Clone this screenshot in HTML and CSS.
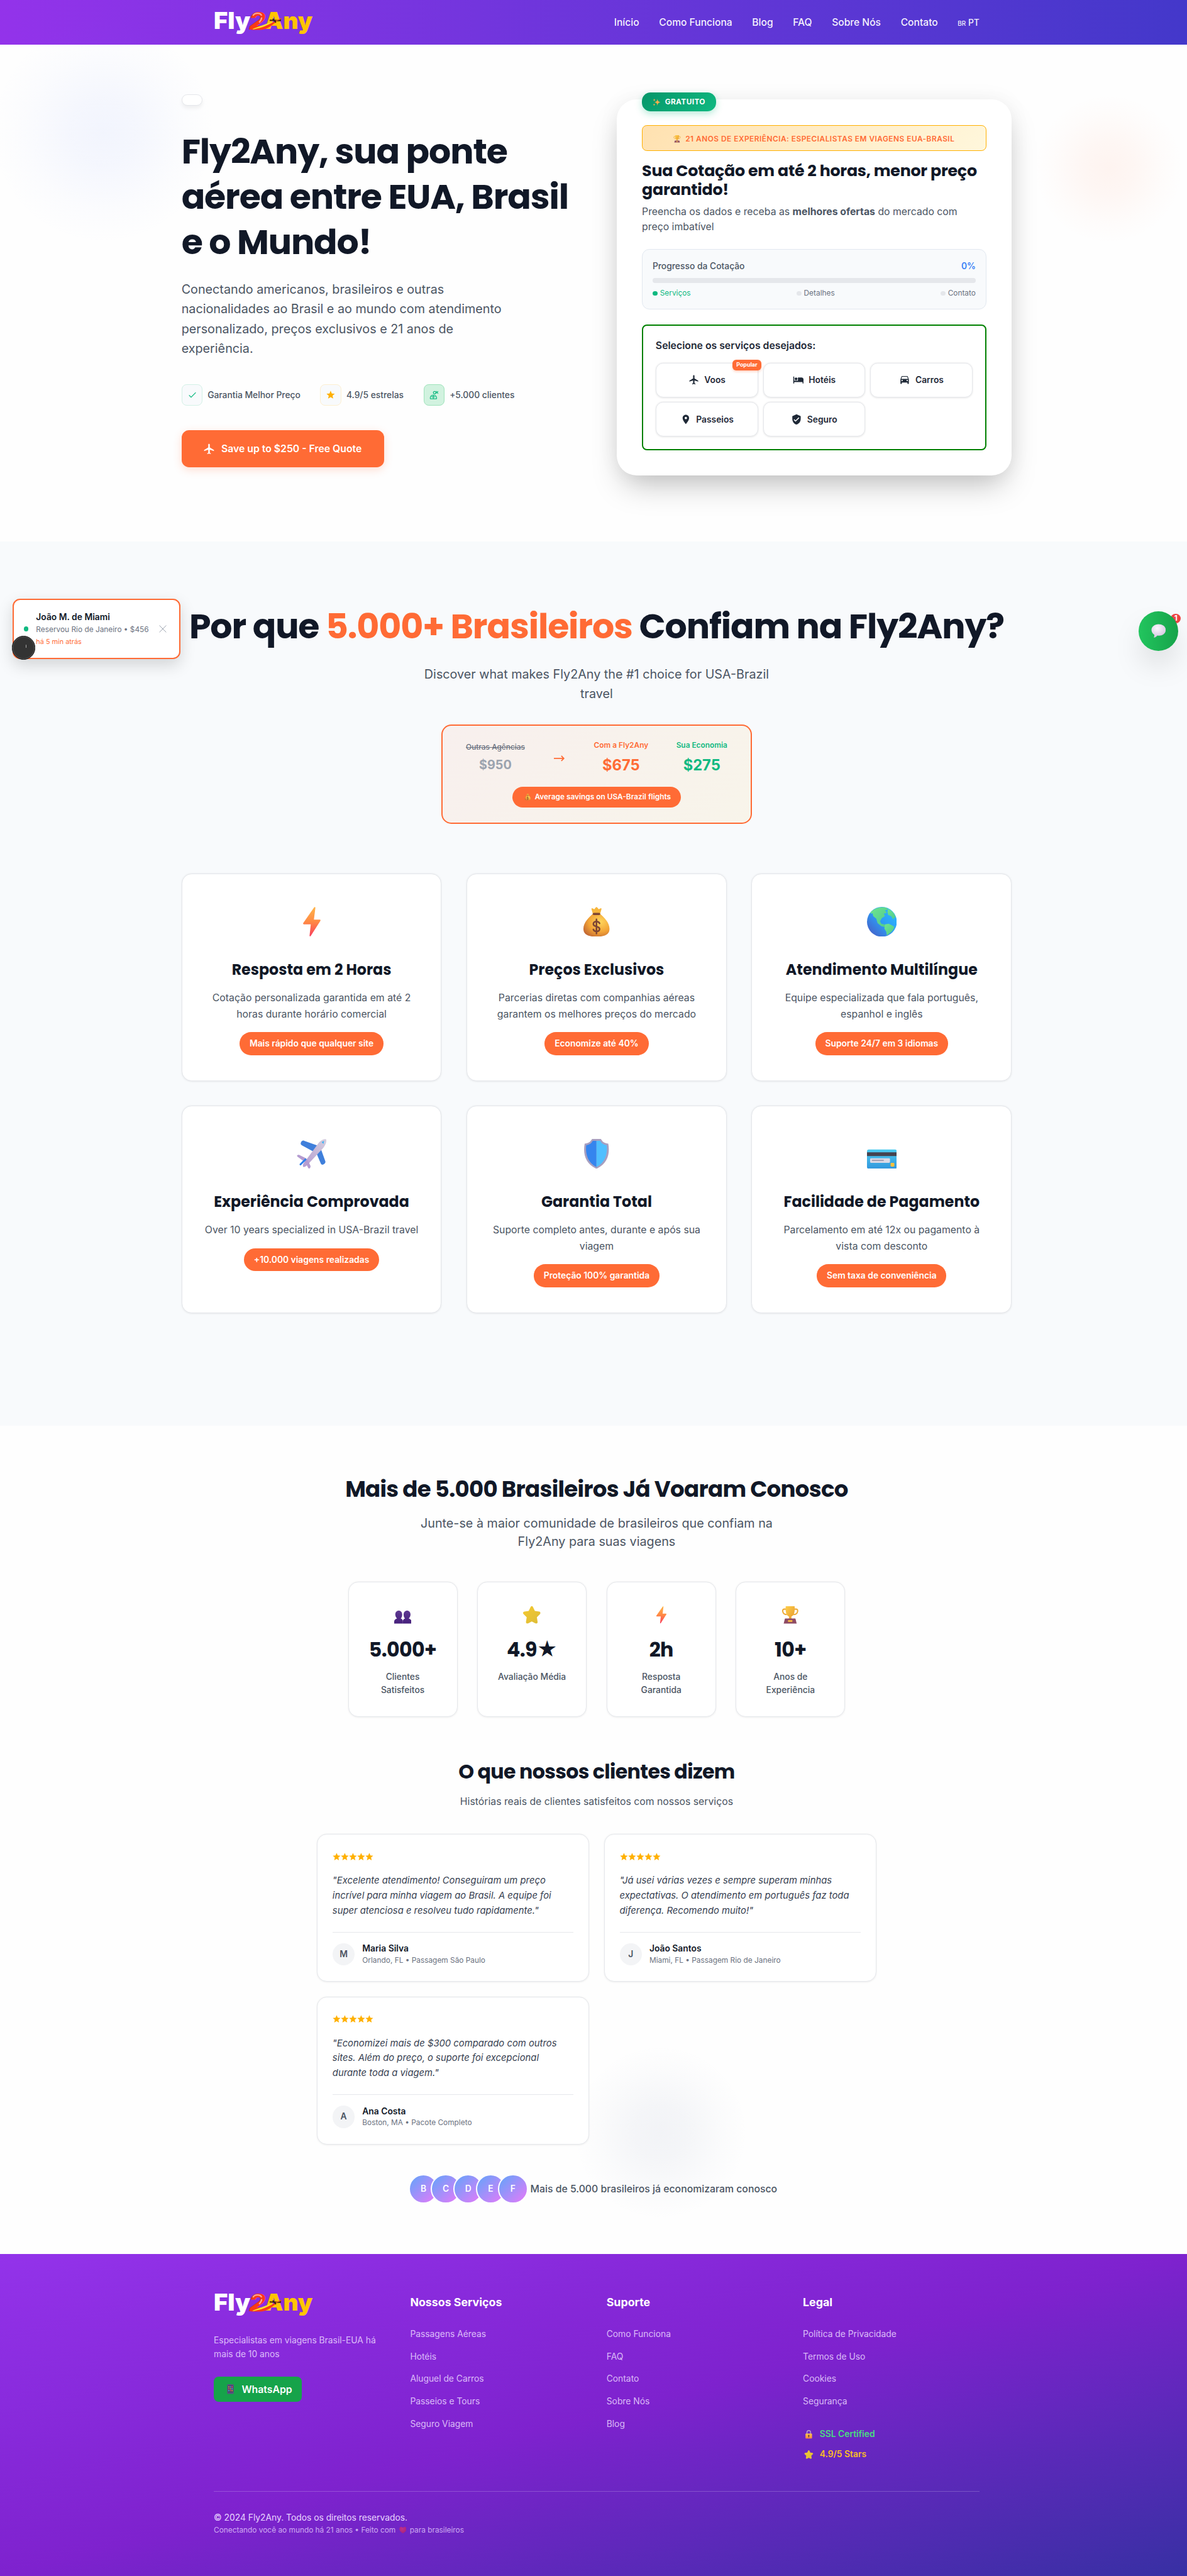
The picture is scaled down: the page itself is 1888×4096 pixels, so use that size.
FILE: index.html
```html
<!DOCTYPE html>
<html lang="pt-BR">
<head>
<meta charset="utf-8">
<title>Fly2Any</title>
<link rel="stylesheet" href="styles.css">
</head>
<body>
<svg class="sprite" aria-hidden="true">
  <defs>
    <linearGradient id="g-bolt" x1="0" y1="0" x2="0" y2="1"><stop offset="0" stop-color="#ffb54a"/><stop offset=".5" stop-color="#ff8a45"/><stop offset="1" stop-color="#f93e5c"/></linearGradient>
    <radialGradient id="g-bag" cx=".65" cy=".35" r=".75"><stop offset="0" stop-color="#ffd65c"/><stop offset=".6" stop-color="#f2a336"/><stop offset="1" stop-color="#c46a34"/></radialGradient>
    <linearGradient id="g-sea" x1="1" y1="0" x2="0" y2="1"><stop offset="0" stop-color="#2bc0ff"/><stop offset=".5" stop-color="#2d9bf5"/><stop offset="1" stop-color="#4a55c0"/></linearGradient>
    <linearGradient id="g-land" x1="0" y1="0" x2="1" y2="1"><stop offset="0" stop-color="#6fe58f"/><stop offset="1" stop-color="#4fc98e"/></linearGradient>
    <linearGradient id="g-body" x1="1" y1="0" x2="0" y2="1"><stop offset="0" stop-color="#d5cfdf"/><stop offset="1" stop-color="#b49bd0"/></linearGradient>
    <linearGradient id="g-gold" x1="0" y1="0" x2="1" y2="1"><stop offset="0" stop-color="#ffcf4a"/><stop offset="1" stop-color="#e79a2e"/></linearGradient>
    <linearGradient id="g-star" x1="0" y1="0" x2="1" y2="1"><stop offset="0" stop-color="#f5c930"/><stop offset="1" stop-color="#dcbc38"/></linearGradient>
    <linearGradient id="g-bust" x1="0" y1="0" x2="0" y2="1"><stop offset="0" stop-color="#5f3a92"/><stop offset="1" stop-color="#46207c"/></linearGradient>
    <linearGradient id="g-card" x1="0" y1="0" x2="0" y2="1"><stop offset="0" stop-color="#4ccbf0"/><stop offset="1" stop-color="#3297dd"/></linearGradient>
    <linearGradient id="g-lock" x1="0" y1="0" x2="0" y2="1"><stop offset="0" stop-color="#ffc44c"/><stop offset="1" stop-color="#f9873f"/></linearGradient>
    <radialGradient id="g-talk" cx=".4" cy=".3" r=".8"><stop offset="0" stop-color="#fbf8fd"/><stop offset="1" stop-color="#cdbfdb"/></radialGradient>
    <radialGradient id="g-heart" cx=".4" cy=".3" r=".8"><stop offset="0" stop-color="#d8367d"/><stop offset="1" stop-color="#bb1f5c"/></radialGradient>
  </defs>
  <symbol id="e-bolt" viewBox="0 0 48 48"><path fill="url(#g-bolt)" d="M28 .8c.6-1 2-.6 2 .6L27.600 20.500H37c1 0 1.500 1 1 1.900L22.500 46.800c-.6 1-2 .5-1.900-.6L22.600 28H11.500c-1 0-1.600-1-1.100-1.900z"/></symbol>
  <symbol id="e-bag" viewBox="0 0 48 48"><path fill="#f7b63c" d="M18 11 16 3.500c-.3-1 .6-1.600 1.500-1.200l3 1.400L23 .7c.6-.7 1.500-.7 2.100 0l2.500 3 3-1.400c.9-.4 1.800.2 1.500 1.200L30 11z"/><path fill="url(#g-bag)" d="M18.500 11h11C36 17 45 25 45 35.500 45 43.500 39 48 24 48S3 43.500 3 35.500C3 25 12 17 18.500 11z"/><rect x="18" y="9.500" width="12" height="3.600" rx="1.800" fill="#7d4533"/><path d="M29 26.500c-.8-2-2.600-3-5-3-2.800 0-5 1.500-5 4 0 5.500 10 2.500 10 8 0 2.600-2.200 4-5 4-2.500 0-4.400-1.200-5-3.200M24 20v23" fill="none" stroke="#7d4533" stroke-width="2.600" stroke-linecap="round"/></symbol>
  <symbol id="e-globe" viewBox="0 0 48 48"><circle cx="24" cy="24" r="24" fill="url(#g-sea)"/><path fill="url(#g-land)" d="M6 8.500C12 2 22-.8 30 1c2.500.8 4 2.500 3 3.500l-4 1 3 4-5 1.500 2 4-5 3-3 5 2 4 5 1 4 4-2 1-7-2-6-5-2-7-5-4-1-5c-2 .5-3.500 2-3 0z"/><path fill="url(#g-land)" d="M34 3c6 3 10 7 12 13l-4 4-3-5-5-2-1-5z"/><path fill="url(#g-land)" d="M29 28l6-1 6 3 3 2c-1 4-4 8-7 10l-5 4-1-6-3-5z"/></symbol>
  <symbol id="e-plane" viewBox="0 0 48 48"><path fill="#3f7fdb" d="M7 5c1-2 3-3 5-2l25 9-9 9L8 10C6 9 6 7 7 5zM43 41c-2 1-4 0-4.500-2L30 19l7-8 9 25c.6 2-1 4-3 5z"/><path fill="url(#g-body)" d="M47.500.8c1.200 3-1.500 10-6 15L17 42c-4 4-6.500 3-6.500 3S8.500 42 12 38L34 8C38 2 45-1 47.500.8z"/><path fill="#b49bd0" d="M.6 26.500c1-1 2-1.300 3.500-.8L15 31l3 4 4 8c.5 1.500 0 3-1 4s-2 .5-2.600-.5L14 38 2 29c-1-.8-2-1.600-1.400-2.500z"/><path fill="#3fb4f5" d="M40 5l4-2-1 5z"/><path d="M6 41l8-8" stroke="#2e80ec" stroke-width="3" stroke-linecap="round"/></symbol>
  <symbol id="e-shield" viewBox="0 0 48 48"><path fill="#a79fc0" d="M17 0h14l3 4c2 2 5 3 9 3.500C46 24 42 40 24 48 6 40 2 24 5 7.500 9 7 12 6 14 4z"/><path fill="#3585ee" d="M24 3h-6l-2 3c-2 2-5 3.500-8.500 4C6 24 10 38 24 45.200z"/><path fill="#50bfff" d="M24 3h6l2 3c2 2 5 3.500 8.500 4C42 24 38 38 24 45.200z"/></symbol>
  <symbol id="e-card" viewBox="0 0 48 48"><rect x="0" y="17" width="48" height="31" rx="3" fill="url(#g-card)"/><rect y="21.500" width="48" height="6" fill="#45434f"/><rect x="5" y="31" width="32" height="7.500" rx="1.500" fill="#dcdae6"/><rect x="8" y="33.500" width="19" height="2" fill="#a39fb2"/><rect x="38" y="38.500" width="6" height="6" rx="1.500" fill="#f7c13c"/></symbol>
  <symbol id="e-busts" viewBox="0 0 48 48"><g fill="url(#g-bust)"><path d="M0 48v-5c0-6 5-8 8-9-3-3-5-7-5-11 0-7 4-11 9.500-11S22 16 22 23c0 4-1 8-4 11 3 1 6 3 6 8v6z"/><path d="M24 48v-6c0-5 3-7 6-8-3-3-4-7-4-11 0-7 4-11 9.500-11S45 16 45 23c0 4-2 8-5 11 3 1 8 3 8 9v5z"/></g></symbol>
  <symbol id="e-star" viewBox="0 0 48 48"><path fill="url(#g-star)" d="M20.500 2.500c1.500-3.300 5.500-3.300 7 0L32.500 13l12 1.700c3.500.5 4.700 4.500 2.200 7L38 30.500l2 12.500c.6 3.600-2.800 6-6 4.300L24 42l-10 5.300c-3.200 1.700-6.600-.7-6-4.300l2-12.500-8.700-8.800c-2.500-2.500-1.300-6.500 2.200-7L15.500 13z"/></symbol>
  <symbol id="e-trophy" viewBox="0 0 48 48"><path d="M13 8H7c-3 0-4 3-3.500 6C4.500 20 9 23 15 23M35 8h6c3 0 4 3 3.500 6-1 6-5.500 9-11.500 9" fill="none" stroke="#edab38" stroke-width="3.600"/><path fill="url(#g-gold)" d="M11.500 1.500C11.500.6 12 0 13 0h22c1 0 1.500.6 1.500 1.500C37 14 36 25 27 29l1 6h-8l1-6c-9-4-10-15-9.500-27.500z"/><path fill="#8e4b63" d="M11 34h26c1 0 2 1 2 2l3 12H6l3-12c0-1 1-2 2-2z"/><rect x="18" y="38" width="12" height="5.500" rx="1" fill="#f2b445"/></symbol>
  <symbol id="e-sparkles" viewBox="0 0 48 48"><g fill="#fdb04b"><path d="M29 3c1 13 5 19 17 21-12 2-16 9-17 22-1-13-5-20-17-22C24 22 28 16 29 3z"/><path d="M10 2c.6 6 2.500 8 8 9-5.500 1-7.400 3-8 9-.6-6-2.500-8-8-9 5.500-1 7.400-3 8-9zM9 31c.5 5 2 7 7 8-5 1-6.500 3-7 8-.5-5-2-7-7-8 5-1 6.500-3 7-8z"/></g></symbol>
  <symbol id="e-phone" viewBox="0 0 48 48"><rect x="9" y="1" width="31" height="46" rx="3" fill="#5c4f82"/><rect x="12" y="7" width="25" height="32" fill="#463c66"/><g><path fill="#f9a13a" d="M14 11h5v5h-5zM22 20h5v5h-5zM30 29h5v5h-5z"/><path fill="#45b6f5" d="M22 11h5v5h-5zM30 20h5v5h-5zM14 29h5v5h-5z"/><path fill="#ef5f6f" d="M30 11h5v5h-5zM14 20h5v5h-5zM22 29h5v5h-5z"/></g></symbol>
  <symbol id="e-lock" viewBox="0 0 48 48"><path d="M14 22V13c0-7 4-11 10-11s10 4 10 11v9" fill="none" stroke="#b8a9cd" stroke-width="4.500"/><rect x="6" y="19" width="36" height="28" rx="3.500" fill="url(#g-lock)"/><path fill="#5a3a42" d="M24 26a4 4 0 0 1 2.300 7.300L27 40h-6l.7-6.700A4 4 0 0 1 24 26z"/></symbol>
  <symbol id="e-heart" viewBox="0 0 48 48"><path fill="url(#g-heart)" d="M24 46C10 37 1 28 1 17 1 9 6 3 13 3c5 0 9 3 11 7 2-4 6-7 11-7 7 0 12 6 12 14 0 11-9 20-23 29z"/></symbol>
  <symbol id="e-talk" viewBox="0 0 48 48"><path fill="url(#g-talk)" d="M24 3c13 0 23 8 23 18.500S38 40 26 40c-2 0-4 0-6-.5C17 43 13 46 10 46c-1.500 0-1.500-1.300-.8-2.500.9-1.700 1.300-4 .8-6.500C4.500 33.500 1 28 1 21.500 1 11 11 3 24 3z"/></symbol>
  <symbol id="i-flight" viewBox="0 0 24 24"><path d="M21 16v-2l-8-5V3.500c0-.83-.67-1.500-1.500-1.500S10 2.670 10 3.500V9l-8 5v2l8-2.500V19l-2 1.500V22l3.500-1 3.500 1v-1.500L13 19v-5.500l8 2.500z"/></symbol>
  <symbol id="i-hotel" viewBox="0 0 24 24"><path d="M7 13c1.660 0 3-1.340 3-3S8.660 7 7 7s-3 1.340-3 3 1.340 3 3 3zm12-6h-8v7H3V5H1v15h2v-3h18v3h2v-9c0-2.210-1.790-4-4-4z"/></symbol>
  <symbol id="i-car" viewBox="0 0 24 24"><path d="M18.920 5.010C18.720 4.420 18.160 4 17.500 4h-11c-.66 0-1.210.42-1.420 1.010L3 11v9c0 .55.45 1 1 1h1c.55 0 1-.45 1-1v-2h12v2c0 .55.45 1 1 1h1c.55 0 1-.45 1-1v-9l-2.080-5.990zM6.500 15c-.83 0-1.500-.67-1.500-1.500S5.670 12 6.500 12s1.500.67 1.500 1.500S7.330 15 6.500 15zm11 0c-.83 0-1.500-.67-1.500-1.500s.67-1.500 1.500-1.500 1.500.67 1.500 1.500-.67 1.500-1.500 1.500zM5 10l1.500-4.500h11L19 10H5z"/></symbol>
  <symbol id="i-pin" viewBox="0 0 24 24"><path d="M12 2C8.130 2 5 5.130 5 9c0 5.250 7 13 7 13s7-7.750 7-13c0-3.870-3.130-7-7-7zm0 9.500c-1.380 0-2.500-1.120-2.500-2.500s1.120-2.500 2.500-2.500 2.500 1.120 2.500 2.500-1.120 2.500-2.500 2.500z"/></symbol>
  <symbol id="i-verified" viewBox="0 0 24 24"><path d="M12 1L3 5v6c0 5.550 3.840 10.740 9 12 5.160-1.260 9-6.450 9-12V5l-9-4zm-2 16l-4-4 1.410-1.410L10 14.170l6.590-6.590L18 9l-8 8z"/></symbol>
  <symbol id="i-check" viewBox="0 0 24 24"><path d="M9 16.170L4.830 12l-1.420 1.410L9 19 21 7l-1.410-1.410z"/></symbol>
  <symbol id="i-star" viewBox="0 0 24 24"><path d="M12 17.270L18.180 21l-1.640-7.030L22 9.240l-7.190-.61L12 2 9.190 8.630 2 9.240l5.460 4.730L5.820 21z"/></symbol>
  <symbol id="i-users" viewBox="0 0 24 24"><g fill="none" stroke="currentColor" stroke-width="1.800"><path d="M2 20.500c0-5 2.600-8 7.500-8s8 3 8 8c0 .8-.5 1-1 1H3c-.5 0-1-.2-1-1zM5 16.500h9M9.500 13v8"/><circle cx="12.500" cy="6.500" r="3"/><path d="M15.500 8.500L21 3.500M16 3l5 6"/></g></symbol>
  <symbol id="banner-plane" viewBox="0 0 157 42">
    <path d="M62 10c3-5 12-5 14 0M76 13c0 3-2 6-4 8" fill="none" stroke="#ffa593" stroke-width="2.200"/>
    <path fill="#fb3a16" d="M59 32c14-1 26-7 44-15-11 9-18 16-30 16H60z"/>
    <path fill="#ffe12b" d="M61 31.500c12-4.500 20-7.500 34-12-8 6-18 10-32 12.500z"/>
    <path d="M89 17.500l17 .5M94 15l5 6M106 15v4" stroke="#3a2412" stroke-width="2"/>
    <path d="M99 18.500l9-4" stroke="#e8631a" stroke-width="1.500"/>
  </symbol>
</svg>
<div class="viewport">
<div class="page">

<header class="header">
  <svg class="logo" viewBox="0 0 157 42">
    <text class="logo-fly" x="-1" y="31" textLength="59" lengthAdjust="spacingAndGlyphs">Fly</text>
    <text class="logo-any" x="81" y="31" textLength="77" lengthAdjust="spacingAndGlyphs">Any</text>
    <text class="logo-two" x="56" y="32" textLength="26" lengthAdjust="spacingAndGlyphs">2</text>
    <use href="#banner-plane"/>
  </svg>
  <nav class="nav">
    <a>Início</a><a>Como Funciona</a><a>Blog</a><a>FAQ</a><a>Sobre Nós</a><a>Contato</a>
    <span class="lang"><small>BR</small> PT</span>
  </nav>
</header>

<section class="hero">
  <span class="blob blob-blue"></span>
  <span class="blob blob-orange"></span>
  <div class="hero-copy">
    <div class="hero-pill"></div>
    <h1 class="hero-title">Fly2Any, sua ponte<br>aérea entre EUA, Brasil<br>e o Mundo!</h1>
    <p class="hero-text">Conectando americanos, brasileiros e outras<br>nacionalidades ao Brasil e ao mundo com atendimento<br>personalizado, preços exclusivos e 21 anos de<br>experiência.</p>
    <div class="trust">
      <div class="trust-item"><span class="trust-icon trust-check"><svg><use href="#i-check"/></svg></span>Garantia Melhor Preço</div>
      <div class="trust-item"><span class="trust-icon trust-star"><svg><use href="#i-star"/></svg></span>4.9/5 estrelas</div>
      <div class="trust-item"><span class="trust-icon trust-users"><svg><use href="#i-users"/></svg></span>+5.000 clientes</div>
    </div>
    <a class="cta"><svg><use href="#i-flight"/></svg>Save up to $250 - Free Quote</a>
  </div>

  <div class="quote">
    <span class="free-badge"><svg><use href="#e-sparkles"/></svg>GRATUITO</span>
    <div class="years"><svg><use href="#e-trophy"/></svg>21 ANOS DE EXPERIÊNCIA: ESPECIALISTAS EM VIAGENS EUA-BRASIL</div>
    <h2 class="quote-title">Sua Cotação em até 2 horas, menor preço<br>garantido!</h2>
    <p class="quote-text">Preencha os dados e receba as <strong>melhores ofertas</strong> do mercado com<br>preço imbatível</p>
    <div class="progress">
      <div class="progress-head"><span>Progresso da Cotação</span><b>0%</b></div>
      <div class="progress-bar"></div>
      <div class="progress-steps"><span class="on"><i></i>Serviços</span><span><i></i>Detalhes</span><span><i></i>Contato</span></div>
    </div>
    <div class="services">
      <div class="services-title">Selecione os serviços desejados:</div>
      <div class="services-grid">
        <button><svg><use href="#i-flight"/></svg>Voos<em>Popular</em></button>
        <button><svg><use href="#i-hotel"/></svg>Hotéis</button>
        <button><svg><use href="#i-car"/></svg>Carros</button>
        <button><svg><use href="#i-pin"/></svg>Passeios</button>
        <button><svg><use href="#i-verified"/></svg>Seguro</button>
      </div>
    </div>
  </div>
</section>

<section class="why">
  <h2 class="why-title">Por que <span>5.000+ Brasileiros</span> Confiam na Fly2Any?</h2>
  <p class="why-text">Discover what makes Fly2Any the #1 choice for USA-Brazil<br>travel</p>
  <div class="compare">
    <div class="compare-row">
      <div class="cmp cmp-old"><span>Outras Agências</span><b>$950</b></div>
      <svg class="arrow" viewBox="0 0 21 14"><path d="M2 7h16M14 3l4 4-4 4"/></svg>
      <div class="cmp cmp-us"><span>Com a Fly2Any</span><b>$675</b></div>
      <div class="cmp cmp-save"><span>Sua Economia</span><b>$275</b></div>
    </div>
    <div class="compare-pill"><svg><use href="#e-bag"/></svg>Average savings on USA-Brazil flights</div>
  </div>
  <div class="features">
    <article class="feature"><svg><use href="#e-bolt"/></svg><h3>Resposta em 2 Horas</h3><p>Cotação personalizada garantida em até 2<br>horas durante horário comercial</p><span>Mais rápido que qualquer site</span></article>
    <article class="feature"><svg><use href="#e-bag"/></svg><h3>Preços Exclusivos</h3><p>Parcerias diretas com companhias aéreas<br>garantem os melhores preços do mercado</p><span>Economize até 40%</span></article>
    <article class="feature"><svg><use href="#e-globe"/></svg><h3>Atendimento Multilíngue</h3><p>Equipe especializada que fala português,<br>espanhol e inglês</p><span>Suporte 24/7 em 3 idiomas</span></article>
    <article class="feature"><svg><use href="#e-plane"/></svg><h3>Experiência Comprovada</h3><p>Over 10 years specialized in USA-Brazil travel</p><span>+10.000 viagens realizadas</span></article>
    <article class="feature"><svg><use href="#e-shield"/></svg><h3>Garantia Total</h3><p>Suporte completo antes, durante e após sua<br>viagem</p><span>Proteção 100% garantida</span></article>
    <article class="feature"><svg><use href="#e-card"/></svg><h3>Facilidade de Pagamento</h3><p>Parcelamento em até 12x ou pagamento à<br>vista com desconto</p><span>Sem taxa de conveniência</span></article>
  </div>
</section>

<section class="proof">
  <span class="blob blob-gray"></span>
  <h2 class="proof-title">Mais de 5.000 Brasileiros Já Voaram Conosco</h2>
  <p class="proof-text">Junte-se à maior comunidade de brasileiros que confiam na<br>Fly2Any para suas viagens</p>
  <div class="stats">
    <div class="stat"><svg><use href="#e-busts"/></svg><b>5.000+</b><span>Clientes<br>Satisfeitos</span></div>
    <div class="stat"><svg><use href="#e-star"/></svg><b>4.9★</b><span>Avaliação Média</span></div>
    <div class="stat"><svg><use href="#e-bolt"/></svg><b>2h</b><span>Resposta<br>Garantida</span></div>
    <div class="stat"><svg><use href="#e-trophy"/></svg><b>10+</b><span>Anos de<br>Experiência</span></div>
  </div>
  <h3 class="say-title">O que nossos clientes dizem</h3>
  <p class="say-text">Histórias reais de clientes satisfeitos com nossos serviços</p>
  <div class="reviews">
    <article class="review">
      <div class="stars"><svg><use href="#i-star"/></svg><svg><use href="#i-star"/></svg><svg><use href="#i-star"/></svg><svg><use href="#i-star"/></svg><svg><use href="#i-star"/></svg></div>
      <p>"Excelente atendimento! Conseguiram um preço<br>incrível para minha viagem ao Brasil. A equipe foi<br>super atenciosa e resolveu tudo rapidamente."</p>
      <footer><i>M</i><div><b>Maria Silva</b><span>Orlando, FL • Passagem São Paulo</span></div></footer>
    </article>
    <article class="review">
      <div class="stars"><svg><use href="#i-star"/></svg><svg><use href="#i-star"/></svg><svg><use href="#i-star"/></svg><svg><use href="#i-star"/></svg><svg><use href="#i-star"/></svg></div>
      <p>"Já usei várias vezes e sempre superam minhas<br>expectativas. O atendimento em português faz toda<br>diferença. Recomendo muito!"</p>
      <footer><i>J</i><div><b>João Santos</b><span>Miami, FL • Passagem Rio de Janeiro</span></div></footer>
    </article>
    <article class="review">
      <div class="stars"><svg><use href="#i-star"/></svg><svg><use href="#i-star"/></svg><svg><use href="#i-star"/></svg><svg><use href="#i-star"/></svg><svg><use href="#i-star"/></svg></div>
      <p>"Economizei mais de $300 comparado com outros<br>sites. Além do preço, o suporte foi excepcional<br>durante toda a viagem."</p>
      <footer><i>A</i><div><b>Ana Costa</b><span>Boston, MA • Pacote Completo</span></div></footer>
    </article>
  </div>
  <div class="crowd"><i>B</i><i>C</i><i>D</i><i>E</i><i>F</i><span>Mais de 5.000 brasileiros já economizaram conosco</span></div>
</section>

<footer class="footer">
  <div class="footer-cols">
    <div>
      <svg class="logo" viewBox="0 0 157 42">
        <text class="logo-fly" x="-1" y="31" textLength="59" lengthAdjust="spacingAndGlyphs">Fly</text>
        <text class="logo-any" x="81" y="31" textLength="77" lengthAdjust="spacingAndGlyphs">Any</text>
        <text class="logo-two" x="56" y="32" textLength="26" lengthAdjust="spacingAndGlyphs">2</text>
        <use href="#banner-plane"/>
      </svg>
      <p class="footer-about">Especialistas em viagens Brasil-EUA há<br>mais de 10 anos</p>
      <a class="whats"><svg><use href="#e-phone"/></svg>WhatsApp</a>
    </div>
    <div><h4>Nossos Serviços</h4><ul><li>Passagens Aéreas</li><li>Hotéis</li><li>Aluguel de Carros</li><li>Passeios e Tours</li><li>Seguro Viagem</li></ul></div>
    <div><h4>Suporte</h4><ul><li>Como Funciona</li><li>FAQ</li><li>Contato</li><li>Sobre Nós</li><li>Blog</li></ul></div>
    <div><h4>Legal</h4><ul><li>Política de Privacidade</li><li>Termos de Uso</li><li>Cookies</li><li>Segurança</li></ul>
      <div class="seal seal-ssl"><svg><use href="#e-lock"/></svg>SSL Certified</div>
      <div class="seal seal-stars"><svg><use href="#e-star"/></svg>4.9/5 Stars</div>
    </div>
  </div>
  <div class="footer-end">
    <p>© 2024 Fly2Any. Todos os direitos reservados.</p>
    <small>Conectando você ao mundo há 21 anos • Feito com <svg><use href="#e-heart"/></svg> para brasileiros</small>
  </div>
</footer>

<aside class="toast">
  <i></i>
  <div><b>João M. de Miami</b><span>Reservou Rio de Janeiro • $456</span><em>há 5 min atrás</em></div>
  <svg viewBox="0 0 12 12"><path d="M.5.5l11 11M11.500.5l-11 11"/></svg>
</aside>
<span class="dev-dot"></span>
<div class="chat"><b>1</b><span><svg><use href="#e-talk"/></svg></span></div>

</div>
</div>
</body>
</html>
```

FILE: styles.css
```css
* { box-sizing: border-box; margin: 0; padding: 0; }

body {
  font-family: Inter, sans-serif;
  color: #111827;
  background: #fff;
  overflow: hidden;
}

.sprite { position: absolute; width: 0; height: 0; }
.viewport { width: 1888px; height: 4096px; overflow: hidden; position: relative; }
.page { position: relative; width: 1920px; min-height: 4144px; zoom: 0.98848; display: flex; flex-direction: column; }

i, em { font-style: normal; }
button { font: inherit; color: inherit; }
svg { flex: none; fill: currentColor; }

/* headings */
h1, h2, h3, .stat b {
  font-family: Poppins, Inter, sans-serif;
  font-weight: 700;
  color: #111827;
  white-space: nowrap;
}

/* header */
.header {
  height: 72px;
  padding: 0 344px;
  display: flex;
  align-items: center;
  justify-content: space-between;
  background: linear-gradient(90deg, #9333ea, #4338ca);
}
.logo { display: block; width: 157px; height: 42px; margin-left: 1px; overflow: visible; font-size: 37.500px; font-weight: 900; }
.logo-fly { fill: #fff; }
.logo-any { fill: #ffc400; }
.logo-two { fill: #fb3a16; font-size: 38.500px; font-style: italic; }
.nav { display: flex; align-items: center; gap: 32px; color: rgba(255, 255, 255, .95); font-size: 15.800px; font-weight: 500; }
.lang { font-size: 14px; }
.lang small { font-size: 10px; }

/* hero */
.hero {
  position: relative;
  height: 799px;
  padding: 80px 292px 0;
  display: flex;
  justify-content: space-between;
  align-items: flex-start;
  background: #fefefe;
}
.blob { position: absolute; border-radius: 50%; pointer-events: none; }
.blob-blue { left: -14px; top: -40px; width: 360px; height: 360px; background: radial-gradient(closest-side, rgba(96, 130, 246, .075), rgba(96, 130, 246, .06) 30%, rgba(96, 130, 246, .02) 70%, transparent); }
.blob-orange { left: 1664px; top: 80px; width: 240px; height: 240px; background: radial-gradient(closest-side, rgba(255, 107, 53, .07), rgba(255, 107, 53, .05) 35%, rgba(255, 107, 53, .015) 75%, transparent); }
.hero-copy { position: relative; width: 660px; }
.hero-pill { width: 34px; height: 18px; border: 1px solid #e5e7eb; border-radius: 9px; background: #fff; box-shadow: 0 4px 6px rgba(0, 0, 0, .06); }
.hero-title { margin-top: 37.400px; font-size: 56px; line-height: 72.800px; letter-spacing: -1.120px; }
.hero-text { margin-top: 24px; font-size: 20px; line-height: 32px; color: #4b5563; }
.trust { margin-top: 40.400px; display: flex; gap: 32px; font-size: 14px; font-weight: 500; color: #4b5563; }
.trust-item { display: flex; align-items: center; gap: 8px; }
.trust-icon { width: 34px; height: 34px; border: 1px solid; border-radius: 8px; display: grid; place-items: center; background: #f8fafc; }
.trust-icon svg { width: 16px; height: 16px; }
.trust-check { color: #10b981; border-color: #d3f1e6; }
.trust-star { color: #ffb000; border-color: #fdefd0; }
.trust-users { color: #10b981; border-color: #9fe3bb; background: #d1f2df; }
.cta {
  margin-top: 40px;
  width: 326px;
  height: 60px;
  padding-left: 35px;
  display: flex;
  align-items: center;
  gap: 9px;
  border-radius: 12px;
  background: #ff6b35;
  color: #fff;
  font-size: 16px;
  font-weight: 600;
  box-shadow: 0 4px 14px rgba(255, 107, 53, .22);
}
.cta svg { width: 20px; height: 20px; }

.quote {
  position: relative;
  margin-top: 8px;
  width: 636px;
  height: 605px;
  padding: 41px;
  border-radius: 32px;
  background: #fff;
  box-shadow: 0 25px 50px -12px rgba(0, 0, 0, .25), 0 0 36px rgba(0, 0, 0, .05);
}
.free-badge {
  position: absolute;
  left: 41px;
  top: -11px;
  height: 30px;
  width: 119px;
  display: flex;
  align-items: center;
  justify-content: center;
  gap: 7px;
  border-radius: 14px;
  background: linear-gradient(135deg, #059669, #10b981);
  color: #fff;
  font-size: 12px;
  font-weight: 700;
  letter-spacing: .4px;
  box-shadow: 0 4px 12px rgba(16, 185, 129, .3);
}
.free-badge svg { width: 13px; height: 13px; }
.years {
  height: 42px;
  display: flex;
  align-items: center;
  justify-content: center;
  gap: 7px;
  padding-top: 3px;
  border: 1px solid #ffb000;
  border-radius: 8px;
  background: linear-gradient(135deg, #ffe1b0, #fff7dc);
  color: #ff6b35;
  font-size: 12px;
  font-weight: 600;
  letter-spacing: .5px;
}
.years svg { width: 12px; height: 12px; }
.quote-title { margin-top: 15.600px; font-size: 25.600px; line-height: 31px; letter-spacing: -.256px; }
.quote-text { margin-top: 8.400px; font-size: 16px; line-height: 24px; color: #4b5563; }
.quote-text strong { font-weight: 700; }
.progress { margin-top: 24px; height: 97px; padding: 16px; border: 1px solid #e2e8f0; border-radius: 12px; background: #f8fafc; }
.progress-head { display: flex; justify-content: space-between; font-size: 14px; line-height: 21px; font-weight: 500; color: #4b5563; }
.progress-head b { font-weight: 600; color: #3b82f6; }
.progress-bar { margin: 8px 0; height: 8px; border-radius: 4px; background: #e5e7eb; }
.progress-steps { display: flex; justify-content: space-between; font-size: 12px; line-height: 18px; color: #6b7280; }
.progress-steps span { display: flex; align-items: center; gap: 4px; }
.progress-steps i { width: 8px; height: 8px; border-radius: 50%; background: #e5e7eb; }
.progress-steps .on { color: #10b981; }
.progress-steps .on i { background: #10b981; }
.services { margin-top: 24px; padding: 20px; border: 2.100px solid #008000; border-radius: 8px; }
.services-title { font-size: 16px; line-height: 24px; font-weight: 600; color: #1f2937; }
.services-grid { margin-top: 16px; display: grid; grid-template-columns: repeat(3, 1fr); gap: 8px; }
.services-grid button {
  position: relative;
  height: 55px;
  display: flex;
  align-items: center;
  justify-content: center;
  gap: 8px;
  border: 1px solid #e5e7eb;
  border-radius: 12px;
  background: #fff;
  color: #1f2937;
  font-size: 14px;
  font-weight: 600;
  box-shadow: 0 1px 3px rgba(0, 0, 0, .1);
}
.services-grid svg { width: 18px; height: 18px; }
.services-grid em {
  position: absolute;
  right: -6px;
  top: -6px;
  height: 17px;
  padding: 0 6px;
  border-radius: 6px;
  background: #ff6b35;
  color: #fff;
  font-size: 9px;
  line-height: 17px;
  font-weight: 700;
  box-shadow: 0 2px 4px rgba(255, 107, 53, .3);
}

/* why us */
.why {
  height: 1422px;
  padding-top: 100px;
  display: flex;
  flex-direction: column;
  align-items: center;
  text-align: center;
  background: #f8fafc;
}
.why-title { font-size: 56px; line-height: 72.800px; letter-spacing: -1.120px; }
.why-title span { color: #ff6b35; }
.why-text { margin-top: 25.400px; font-size: 20px; line-height: 32px; color: #4b5563; }
.compare {
  margin-top: 32px;
  width: 500px;
  height: 160px;
  padding: 24px;
  border: 2.100px solid #ff6b35;
  border-radius: 16px;
  background: linear-gradient(135deg, rgba(255, 107, 53, .07), rgba(255, 176, 0, .07));
  display: flex;
  flex-direction: column;
  align-items: center;
}
.compare-row { display: flex; align-items: center; gap: 45px; }
.cmp { display: flex; flex-direction: column; align-items: center; gap: 4px; font-size: 12px; line-height: 18px; }
.cmp span { font-weight: 600; }
.cmp b { font-size: 24px; line-height: 36px; font-weight: 700; }
.cmp-old span { font-weight: 500; color: #6b7280; text-decoration: line-through; }
.cmp-old b { font-size: 20px; line-height: 30px; color: #9ca3af; }
.cmp-us { color: #ff6b35; }
.cmp-save { color: #10b981; }
.arrow { width: 21px; height: 14px; fill: none; stroke: #ff6b35; stroke-width: 1.800; }
.compare-pill {
  margin-top: 16px;
  height: 34px;
  padding: 0 16px 0 19px;
  display: flex;
  align-items: center;
  gap: 6px;
  border-radius: 17px;
  background: #ff6b35;
  color: #fff;
  font-size: 12px;
  font-weight: 600;
}
.compare-pill svg { width: 11px; height: 11px; }
.features { margin-top: 80.400px; width: 1336px; display: grid; grid-template-columns: repeat(3, 1fr); gap: 40px; }
.feature {
  height: 333.300px;
  padding: 52px 20px 0;
  display: flex;
  flex-direction: column;
  align-items: center;
  border: 1px solid #e5e7eb;
  border-radius: 16px;
  background: #fff;
  box-shadow: 0 1px 3px rgba(0, 0, 0, .08);
}
.feature svg { width: 48px; height: 48px; }
.feature h3 { margin-top: 36px; font-size: 24px; line-height: 33.600px; }
.feature p { margin-top: 16.400px; font-size: 16px; line-height: 26px; color: #4b5563; }
.feature span { margin-top: 16px; height: 37px; padding: 0 16px; border-radius: 18.500px; background: #ff6b35; color: #fff; font-size: 14px; line-height: 37px; font-weight: 600; }

/* social proof */
.proof {
  position: relative;
  height: 1333px;
  padding-top: 81px;
  display: flex;
  flex-direction: column;
  align-items: center;
  text-align: center;
  background: #fefefe;
}
.proof > * { position: relative; }
.proof > .blob-gray { position: absolute; left: 923px; top: 997px; width: 280px; height: 280px; background: radial-gradient(closest-side, rgba(75, 95, 140, .065), rgba(75, 95, 140, .055) 30%, rgba(75, 95, 140, .018) 70%, transparent); }
.proof-title { font-size: 36px; line-height: 43.200px; letter-spacing: -.720px; }
.proof-text { margin-top: 18.700px; font-size: 20px; line-height: 30px; color: #4b5563; }
.stats { margin-top: 48px; display: grid; grid-template-columns: repeat(4, 176px); gap: 32px; }
.stat {
  height: 218px;
  padding-top: 39px;
  display: flex;
  flex-direction: column;
  align-items: center;
  border: 1px solid #e5e7eb;
  border-radius: 16px;
  background: #fff;
  box-shadow: 0 1px 3px rgba(0, 0, 0, .07);
}
.stat svg { width: 28px; height: 28px; }
.stat b { margin-top: 18px; font-size: 32px; line-height: 48px; letter-spacing: -.640px; }
.stat span { margin-top: 9px; font-size: 14px; line-height: 21px; font-weight: 500; color: #4b5563; }
.say-title { margin-top: 70.500px; font-size: 32px; line-height: 36px; letter-spacing: -.640px; }
.say-text { margin-top: 18px; font-size: 16px; line-height: 24px; color: #4b5563; }
.reviews { margin-top: 40px; width: 900px; display: grid; grid-template-columns: 1fr 1fr; gap: 24px; text-align: left; }
.review { height: 237.500px; padding: 28px 24px 0; border: 1px solid #e5e7eb; border-radius: 16px; background: #fff; box-shadow: 0 1px 3px rgba(0, 0, 0, .07); }
.stars { display: flex; height: 16px; color: #ffb000; }
.stars svg { width: 15px; height: 15px; margin-left: -1px; margin-right: -.7px; }
.review p { margin-top: 18.500px; font-size: 15px; line-height: 24px; font-style: italic; color: #374151; white-space: nowrap; }
.review footer { margin-top: 21.500px; padding-top: 16px; display: flex; align-items: center; gap: 12px; border-top: 1px solid #e5e7eb; }
.review i { width: 36px; height: 36px; border-radius: 50%; background: #f3f4f6; color: #4b5563; font-size: 14px; line-height: 36px; font-weight: 600; text-align: center; }
.review b { display: block; font-size: 14px; line-height: 20.500px; font-weight: 600; }
.review span { display: block; font-size: 12px; line-height: 18px; color: #6b7280; }
.crowd { margin-top: 48px; padding-right: 12px; display: flex; align-items: center; font-size: 16px; font-weight: 500; color: #4b5563; }
.crowd i { width: 48px; height: 48px; margin-right: -12px; border: 2.100px solid #fff; border-radius: 50%; background: linear-gradient(135deg, #60a5fa, #e879f9); color: #fff; font-size: 14px; line-height: 44px; font-weight: 600; }
.crowd span { margin-left: 16px; }

/* footer */
.footer { flex: 1; padding: 64px 344px 0; background: linear-gradient(to bottom right, #9333ea, #7e22ce, #3730a3); color: #e9d5ff; font-size: 14px; }
.footer-cols { display: grid; grid-template-columns: repeat(4, 284px); gap: 32px; height: 317px; }
.footer .logo { margin-top: -5px; }
.footer-about { margin-top: 26px; line-height: 22.750px; opacity: .85; }
.whats { margin-top: 25px; width: 142px; height: 40px; padding-left: 17px; display: flex; align-items: center; gap: 9px; border-radius: 8px; background: #16a34a; color: #fff; font-size: 16px; font-weight: 600; }
.whats svg { width: 19px; height: 16px; }
.footer h4 { color: #fff; font-size: 18px; line-height: 28px; font-weight: 700; }
.footer ul { margin-top: 25.500px; list-style: none; display: flex; flex-direction: column; gap: 12px; opacity: .85; }
.footer li { line-height: 24px; }
.seal { display: flex; align-items: center; gap: 9px; margin-top: 8.500px; padding-left: 1px; line-height: 24px; font-weight: 600; }
.seal svg { width: 17px; height: 14px; }
.seal-ssl { margin-top: 28.500px; color: #4ade80; }
.seal-stars { color: #fbbf24; }
.footer-end { padding-top: 32px; border-top: 1px solid rgba(255, 255, 255, .2); }
.footer-end p { line-height: 22px; }
.footer-end small { display: block; font-size: 12px; line-height: 18px; opacity: .75; }
.footer-end small svg { width: 12px; height: 12px; vertical-align: -2px; margin: 0 2px; }

/* floating widgets */
.toast {
  position: absolute;
  left: 20px;
  top: 963px;
  width: 270px;
  height: 97px;
  padding: 0 20px 0 16px;
  display: flex;
  align-items: center;
  border: 2.100px solid #ff6b35;
  border-radius: 12px;
  background: #fff;
  box-shadow: 0 10px 25px rgba(0, 0, 0, .15);
}
.toast i { width: 8px; height: 8px; border-radius: 50%; background: #10b981; margin-right: 12px; }
.toast div { flex: 1; white-space: nowrap; }
.toast b, .toast span, .toast em { display: block; }
.toast b { font-size: 14px; line-height: 23px; font-weight: 600; }
.toast span { font-size: 12px; line-height: 20px; color: #6b7280; }
.toast em { font-size: 11px; line-height: 18px; color: #ff6b35; }
.toast svg { width: 12px; height: 12px; stroke: #9ca3af; stroke-width: 1; }
.dev-dot { position: absolute; left: 19px; top: 1023px; width: 38px; height: 38px; border-radius: 50%; background: #333; border: 1px solid #111; box-shadow: inset 0 0 0 1px #555; }
.dev-dot::after { content: ""; position: absolute; left: 21px; top: 13px; width: 2px; height: 5px; border-radius: 1px; background: #aaa; }
.chat { position: absolute; left: 1832px; top: 983px; width: 64px; height: 64px; }
.chat span { position: absolute; inset: 0; display: grid; place-items: center; border-radius: 50%; background: linear-gradient(90deg, #22c55e, #16a34a); box-shadow: 0 25px 50px -12px rgba(0, 0, 0, .25); }
.chat svg { width: 24px; height: 24px; }
.chat b { position: absolute; right: -4px; top: 4px; width: 16px; height: 16px; border-radius: 50%; background: #ef4444; color: #fff; font-size: 12px; line-height: 16px; font-weight: 700; text-align: center; }
```
